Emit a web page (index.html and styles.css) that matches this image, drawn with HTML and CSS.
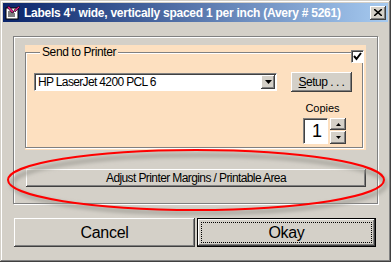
FILE: index.html
```html
<!DOCTYPE html>
<html lang="en">
<head>
  <meta charset="UTF-8">
  <title>Labels 4" wide, vertically spaced 1 per inch (Avery # 5261)</title>
  <link rel="stylesheet" href="styles.css">
</head>
<body>
  <div class="window">
    <div class="titlebar">
      <svg class="app-icon" width="16" height="16" viewBox="0 0 16 16">
        <rect x="1" y="3" width="12" height="11" fill="#fff" stroke="#000"/>
        <path d="M3 7h6M3 9h7M3 11h7" stroke="#000"/>
        <path d="M2 2l5 6 2-1-5-6z" fill="#e0208a" stroke="#000" stroke-width="0.6"/>
        <path d="M9 5l5-4 1 1-5 5z" fill="#e0208a" stroke="#000" stroke-width="0.6"/>
      </svg>
      <span class="title">Labels 4" wide, vertically spaced 1 per inch (Avery # 5261)</span>
      <button class="close">
        <svg width="8" height="7" viewBox="0 0 8 7"><path d="M0 0l8 7M8 0l-8 7" stroke="#000" stroke-width="1.6"/></svg>
      </button>
    </div>

    <div class="client">
      <div class="panel">
        <div class="peach">
          <span class="check">
            <svg width="9" height="9" viewBox="0 0 9 9"><path d="M1 4l2.5 3L8 1" fill="none" stroke="#000" stroke-width="2"/></svg>
          </span>
          <fieldset class="group">
            <legend>Send to Printer</legend>
            <div class="printer-row">
              <div class="combo">
                <span class="combo-text">HP LaserJet 4200 PCL 6</span>
                <span class="drop">
                  <svg width="7" height="4" viewBox="0 0 7 4"><path d="M0 0h7L3.5 4z" fill="#000"/></svg>
                </span>
              </div>
              <button class="btn setup"><u>S</u>etup . . .</button>
            </div>
            <div class="copies">
              <span class="copies-label">Copies</span>
              <div class="spin">
                <span class="spin-value">1</span>
                <div class="arrows">
                  <span class="arrow"><svg width="5" height="3" viewBox="0 0 5 3"><path d="M2.5 0L5 3H0z" fill="#000"/></svg></span>
                  <span class="arrow"><svg width="5" height="3" viewBox="0 0 5 3"><path d="M0 0h5L2.5 3z" fill="#000"/></svg></span>
                </div>
              </div>
            </div>
          </fieldset>
        </div>
        <button class="btn adjust">Adjust Printer Margins / Printable Area</button>
      </div>

      <div class="actions">
        <button class="btn big">Cancel</button>
        <button class="btn big default"><span class="focus">Okay</span></button>
      </div>
    </div>

    <!-- hand drawn highlight round the margins button -->
    <svg class="mark" width="391" height="262" viewBox="0 0 391 262">
      <defs>
        <filter id="soft" x="-10%" y="-50%" width="120%" height="200%">
          <feGaussianBlur stdDeviation="2"/>
        </filter>
      </defs>
      <ellipse cx="199" cy="184" rx="187" ry="29" fill="none" stroke="#9a9890" stroke-width="3" filter="url(#soft)"/>
      <ellipse cx="196" cy="180" rx="188" ry="30" fill="none" stroke="#f00" stroke-width="2"/>
    </svg>
  </div>
</body>
</html>
```

FILE: styles.css
```css
html, body {
  margin: 0;
  padding: 0;
  background: #d4d0c8;
}

.window {
  position: relative;
  width: 391px;
  height: 262px;
  box-sizing: border-box;
  padding: 3px;
  background: #d4d0c8;
  font-family: "Liberation Sans", Arial, sans-serif;
  box-shadow: inset -1px -1px #404040, inset 1px 1px #d4d0c8, inset -2px -2px #808080, inset 2px 2px #fff;
  overflow: hidden;
}

.titlebar {
  display: flex;
  align-items: center;
  height: 19px;
  padding: 0 2px 0 2px;
  background: linear-gradient(to right, #0a246a, #a6caf0);
  color: #fff;
}

.app-icon {
  flex: none;
  margin-right: 3px;
}

.title {
  flex: 1;
  font-weight: bold;
  font-size: 12px;
  letter-spacing: -0.25px;
  white-space: nowrap;
}

.close {
  display: flex;
  align-items: center;
  justify-content: center;
  width: 16px;
  height: 14px;
  padding: 0;
  border: none;
  background: #d4d0c8;
  box-shadow: inset -1px -1px #404040, inset 1px 1px #fff, inset -2px -2px #808080;
}

.client {
  padding-top: 14px;
}

.panel {
  margin: 0 10px;
  padding: 8px 11px 16px 11px;
  border: 1px solid #808080;
  box-shadow: 1px 1px 0 #fff, inset 1px 1px 0 #fff;
}

.peach {
  position: relative;
  height: 105px;
  padding: 0 3px 2px 0;
  box-sizing: border-box;
  background: #fde0c0;
}

.check {
  position: absolute;
  top: 5px;
  right: 2px;
  width: 11px;
  height: 11px;
  display: flex;
  align-items: center;
  justify-content: center;
  background: #fff;
  border: 1px solid;
  border-color: #808080 #fff #fff #808080;
  box-shadow: inset 1px 1px #404040;
  z-index: 1;
}

.group {
  height: 100%;
  box-sizing: border-box;
  margin: 0;
  padding: 13px 8px 0 8px;
  border: 1px solid #808080;
  box-shadow: inset 1px 1px 0 #fff, 1px 1px 0 #fff;
}

.group legend {
  margin-left: 6px;
  padding: 0 2px;
  font-size: 12px;
  line-height: 14px;
  letter-spacing: -0.4px;
  background: #fde0c0;
}

.printer-row {
  display: flex;
  align-items: center;
  gap: 14px;
}

.combo {
  display: flex;
  align-items: center;
  width: 243px;
  height: 18px;
  box-sizing: border-box;
  background: #fff;
  border: 1px solid;
  border-color: #808080 #fff #fff #808080;
  box-shadow: inset 1px 1px #404040;
}

.combo-text {
  flex: 1;
  padding-left: 3px;
  font-size: 12px;
  letter-spacing: -0.65px;
}

.drop {
  display: flex;
  align-items: center;
  justify-content: center;
  width: 14px;
  height: 14px;
  margin-right: 1px;
  background: #d4d0c8;
  box-shadow: inset -1px -1px #404040, inset 1px 1px #fff, inset -2px -2px #808080;
}

.btn {
  padding: 0;
  border: none;
  background: #d4d0c8;
  color: #000;
  font-family: "Liberation Sans", Arial, sans-serif;
  box-shadow: inset -1px -1px #404040, inset 1px 1px #fff, inset -2px -2px #808080;
}

.setup {
  width: 61px;
  height: 20px;
  font-size: 12px;
  letter-spacing: -0.5px;
}

.copies {
  display: flex;
  flex-direction: column;
  align-items: center;
  width: 43px;
  margin: 9px 8px 0 auto;
}

.copies-label {
  font-size: 11px;
  line-height: 14px;
  margin-bottom: 3px;
  margin-left: -4px;
}

.spin {
  display: flex;
  gap: 2px;
}

.spin-value {
  width: 25px;
  height: 26px;
  box-sizing: border-box;
  padding-right: 5px;
  text-align: right;
  font-size: 18px;
  line-height: 24px;
  background: #fff;
  border: 1px solid;
  border-color: #808080 #fff #fff #808080;
  box-shadow: inset 1px 1px #404040;
}

.arrows {
  display: flex;
  flex-direction: column;
  gap: 1px;
}

.arrow {
  display: flex;
  align-items: center;
  justify-content: center;
  width: 16px;
  height: 12px;
  background: #d4d0c8;
  box-shadow: inset -1px -1px #404040, inset 1px 1px #fff, inset -2px -2px #808080;
}

.arrow + .arrow {
  height: 13px;
}

.adjust {
  display: block;
  width: 340px;
  height: 18px;
  margin: 19px 0 0 1px;
  font-size: 12px;
  letter-spacing: -0.6px;
}

.actions {
  display: flex;
  gap: 2px;
  padding: 14px 0 0 11px;
}

.big {
  width: 181px;
  height: 29px;
  font-size: 16px;
  letter-spacing: -0.3px;
}

.default {
  width: 179px;
  padding: 3px;
  border: 1px solid #000;
  box-shadow: inset -1px -1px #404040, inset 1px 1px #fff, inset -2px -2px #808080;
}

.focus {
  display: flex;
  align-items: center;
  justify-content: center;
  height: 100%;
  box-sizing: border-box;
  border: 1px dotted #000;
}

.mark {
  position: absolute;
  top: 0;
  left: 0;
  pointer-events: none;
}
```
